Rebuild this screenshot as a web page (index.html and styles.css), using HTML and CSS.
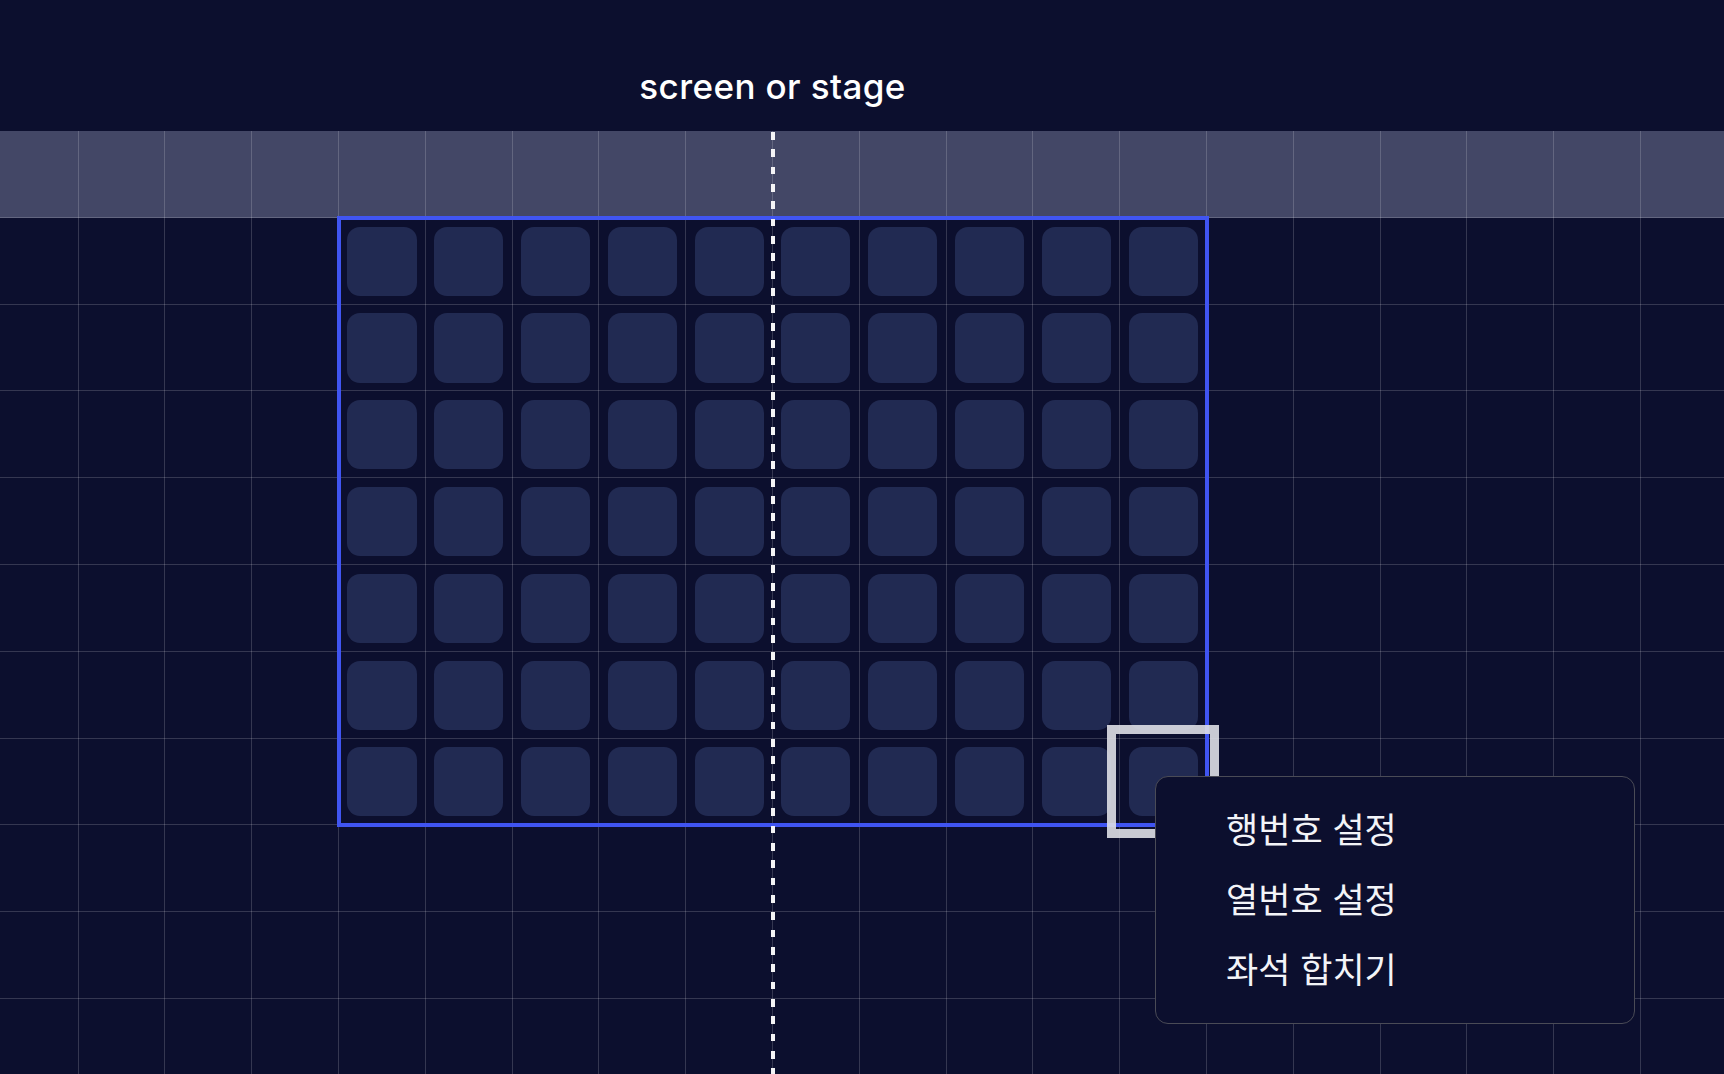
FILE: index.html
```html
<!DOCTYPE html>
<html lang="ko">
<head>
    <meta charset="UTF-8">
    <meta name="viewport" content="width=device-width, initial-scale=1.0">
    <title>Seat Map Editor</title>
    <link rel="stylesheet" href="styles.css">
</head>
<body>
    <header class="top">
        <div class="stage-label">screen or stage</div>
    </header>

    <main class="canvas">
        <div id="seat-map" class="seat-map"></div>

        <!-- overlays -->
        <div class="center-line"></div>
        <div class="selection"></div>

        <ul class="context-menu">
            <li>행번호 설정</li>
            <li>열번호 설정</li>
            <li>좌석 합치기</li>
        </ul>
    </main>

    <script>
        // Fill the seat map: 10 columns x 7 rows
        const map = document.getElementById('seat-map');
        for (let i = 0; i < 70; i++) {
            const seat = document.createElement('div');
            seat.className = 'seat';
            map.appendChild(seat);
        }
    </script>
</body>
</html>
```

FILE: styles.css
```css
body {
    margin: 0;
    background-color: #0c0f2e;
    font-family: "Noto Sans CJK KR", "Noto Sans", sans-serif;
    overflow: hidden;
}

.top {
    height: 131px;
    box-sizing: border-box;
    padding-top: 65px;
}

.stage-label {
    margin-left: 338.6px;
    width: 868px;
    text-align: center;
    font-family: Inter, "Liberation Sans", sans-serif;
    font-weight: 500;
    font-size: 35px;
    line-height: 42px;
    letter-spacing: 0.4px;
    color: #ffffff;
}

/* grid canvas: first row is the screen band */
.canvas {
    position: relative;
    height: 943px;
    background-color: #0c0f2e;
    background-image:
        repeating-linear-gradient(to right, transparent 0 77.6px, rgba(255, 255, 255, 0.17) 77.6px 78.6px, transparent 78.6px 86.8px),
        repeating-linear-gradient(to bottom, transparent 0 85.8px, rgba(255, 255, 255, 0.17) 85.8px 86.8px),
        linear-gradient(to bottom, #434766 0 86.8px, transparent 86.8px);
}

.seat-map {
    display: grid;
    grid-template-columns: repeat(10, 86.8px);
    grid-auto-rows: 86.8px;
    width: 868px;
    margin-left: 338.6px;
    padding-top: 86.8px;
    position: relative;
}

.seat-map::after {
    content: "";
    position: absolute;
    left: 0;
    right: 0;
    top: 86.8px;
    bottom: 0;
    outline: 4px solid #4055f2;
    outline-offset: -2px;
    pointer-events: none;
}

.seat {
    margin: 8.9px;
    border-radius: 13px;
    background-color: #212a52;
}

.center-line {
    position: absolute;
    left: 770.7px;
    top: 0.7px;
    bottom: 0;
    width: 4px;
    background-image: repeating-linear-gradient(to bottom, #f4f4f6 0 7.8px, transparent 7.8px 17.34px);
}

.selection {
    position: absolute;
    left: 1106.7px;
    top: 594.3px;
    width: 112.6px;
    height: 113px;
    box-sizing: border-box;
    border: 9px solid rgba(222, 223, 230, 0.9);
}

.context-menu {
    position: absolute;
    left: 1155px;
    top: 645px;
    width: 480px;
    height: 248px;
    box-sizing: border-box;
    margin: 0;
    padding: 16px 0 0 70px;
    list-style: none;
    background-color: #0c0f2e;
    border: 1.5px solid #4a4b56;
    border-radius: 13px;
}

.context-menu li {
    font-size: 35px;
    line-height: 70px;
    color: #f3f4f8;
}
```
